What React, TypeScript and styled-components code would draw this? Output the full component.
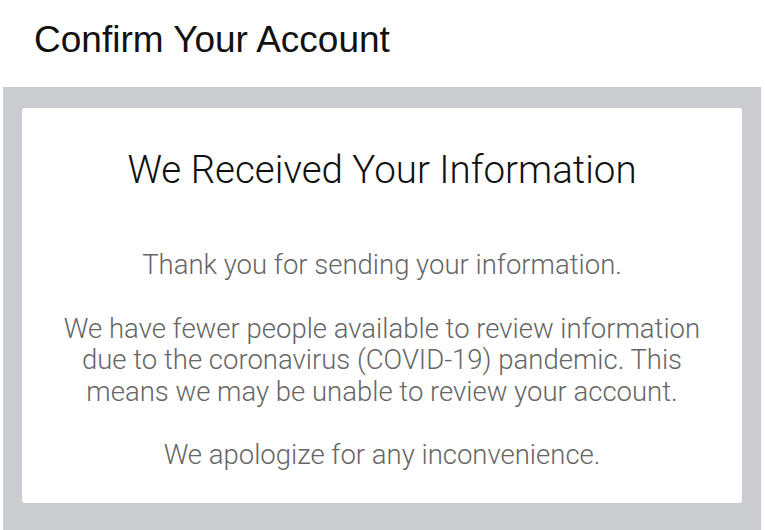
import styled, { createGlobalStyle } from "styled-components";

const GlobalStyle = createGlobalStyle`
  html, body {
    margin: 0;
    padding: 0;
    background: #ffffff;
  }
`;

const Page = styled.div`
  width: 765px;
  height: 530px;
  display: flex;
  flex-direction: column;
  background: #ffffff;
  padding: 0 4px 2px 3px;
  box-sizing: border-box;
`;

const Header = styled.header`
  height: 87px;
  flex-shrink: 0;
  display: flex;
  align-items: flex-start;
  padding: 19px 0 0 31px;
  box-sizing: border-box;
  font-family: "Liberation Sans", Arial, sans-serif;
  font-size: 37px;
  color: #111111;
`;

const Backdrop = styled.main`
  flex: 1;
  background: #cbccd0;
  padding: 21px 19px 28px 19px;
  display: flex;
`;

const Card = styled.section`
  flex: 1;
  background: #ffffff;
  border-radius: 3px;
  padding: 40px 34px 0;
  display: flex;
  flex-direction: column;
  align-items: center;
  text-align: center;
  font-family: Roboto, "Noto Sans", sans-serif;
  font-weight: 300;
`;

const Title = styled.h1`
  margin: 0 0 57px;
  font-size: 38.5px;
  font-weight: 300;
  color: #111111;
  line-height: 44px;
  white-space: nowrap;
`;

const Paragraph = styled.p`
  margin: 0 0 32px;
  font-size: 27.5px;
  line-height: 31.5px;
  color: #666666;
`;

export default function App() {
  return (
    <>
      <GlobalStyle />
      <Page>
        <Header>Confirm Your Account</Header>
        <Backdrop>
          <Card>
            <Title>We Received Your Information</Title>
            <Paragraph>Thank you for sending your information.</Paragraph>
            <Paragraph>
              We have fewer people available to review information due to the
              coronavirus (COVID-19) pandemic. This means we may be unable to
              review your account.
            </Paragraph>
            <Paragraph>We apologize for any inconvenience.</Paragraph>
          </Card>
        </Backdrop>
      </Page>
    </>
  );
}
